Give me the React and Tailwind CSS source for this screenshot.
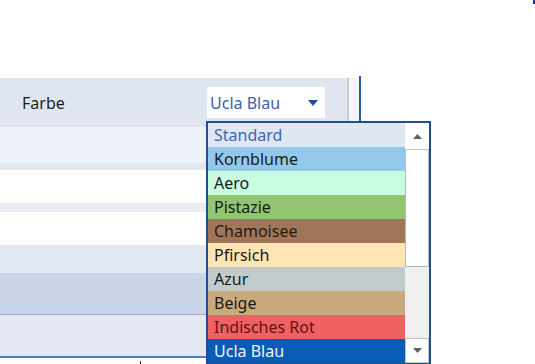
const colors = [
  { name: 'Standard', bg: 'bg-[#dfe7f2]', text: 'text-[#3d65b0]' },
  { name: 'Kornblume', bg: 'bg-[#93c8ea]', text: 'text-[#1a1a1a]' },
  { name: 'Aero', bg: 'bg-[#c8fde2]', text: 'text-[#1a1a1a]' },
  { name: 'Pistazie', bg: 'bg-[#93c472]', text: 'text-[#1a1a1a]' },
  { name: 'Chamoisee', bg: 'bg-[#9f7659]', text: 'text-[#2a1a10]' },
  { name: 'Pfirsich', bg: 'bg-[#ffe4b4]', text: 'text-[#1a1a1a]' },
  { name: 'Azur', bg: 'bg-[#c3cccc]', text: 'text-[#1a1a1a]' },
  { name: 'Beige', bg: 'bg-[#c8aa7d]', text: 'text-[#1a1a1a]' },
  { name: 'Indisches Rot', bg: 'bg-[#ee6262]', text: 'text-[#6a1010]' },
  { name: 'Ucla Blau', bg: 'bg-[#0b5cb6]', text: 'text-[#eef3fb]' },
];

export default function App() {
  return (
    <div className="relative w-[535px] h-[364px] overflow-hidden bg-white font-['Segoe_UI','Noto_Sans',sans-serif] text-[16px] leading-none">
      <div className="absolute right-0 top-0 w-[2px] h-[4px] bg-[#1030c0]" />

      <div className="pt-[78px] w-[207px]">
        <div className="h-[49px] bg-[#dfe6f1] flex items-center pl-[22px] text-[#1e1e1e]">Farbe</div>
        <div className="h-[36px] bg-[#eef2f8]" />
        <div className="h-[7px] bg-[#e2e8f1]" />
        <div className="h-[33px] bg-white" />
        <div className="h-[9px] bg-[#e9edf4]" />
        <div className="h-[33px] bg-white" />
        <div className="h-[28px] bg-[#e3e9f3]" />
        <div className="h-[42px] bg-[#c9d5ea] border-b border-[#a3acbc]" />
        <div className="h-[41px] bg-[#e3e8f2]" />
        <div className="h-[2px] bg-[#4a7fc0]" />
      </div>
      <div className="absolute left-[140px] top-[361px] w-px h-[3px] bg-[#333]" />

      {/* header strip to the right of the column */}
      <div className="absolute left-[207px] top-[78px] w-[140px] h-[43px] bg-[#dfe6f1]">
        <div className="mt-[9px] w-[118px] h-[31px] bg-white flex items-center justify-between pl-[3px] pr-[7px] text-[#3d5ea8]">
          <span>Ucla Blau</span>
          <svg width="10" height="6" viewBox="0 0 10 6"><path d="M0 0h10L5 6z" fill="#1f4f94" /></svg>
        </div>
      </div>
      <div className="absolute left-[347px] top-[78px] w-[2px] h-[43px] bg-[#c8ccd3]" />
      <div className="absolute left-[349px] top-[78px] w-[10px] h-[43px] bg-[#f3f5f9]" />
      <div className="absolute left-[359px] top-[76px] w-[2px] h-[45px] bg-[#2a5ba0]" />

      {/* dropdown list */}
      <div className="absolute left-[206px] top-[121px] w-[225px] border-2 border-[#1f4f92] flex">
        <div className="flex-1 flex flex-col">
          {colors.map(c => (
            <div key={c.name} className={`h-[24px] flex items-center pl-[6px] ${c.bg} ${c.text}`}>{c.name}</div>
          ))}
        </div>
        <div className="w-[24px] flex flex-col bg-[#f0f0f0]">
          <div className="h-[27px] bg-white border-b border-[#c4c4c4] flex items-center justify-center">
            <svg width="9" height="5" viewBox="0 0 9 5"><path d="M0 5h9L4.5 0z" fill="#606060" /></svg>
          </div>
          <div className="h-[117px] bg-white border border-t-0 border-[#b8b8b8]" />
          <div className="flex-1" />
          <div className="h-[25px] bg-white border border-[#c4c4c4] flex items-center justify-center">
            <svg width="9" height="5" viewBox="0 0 9 5"><path d="M0 0h9L4.5 5z" fill="#606060" /></svg>
          </div>
        </div>
      </div>
    </div>
  );
}
